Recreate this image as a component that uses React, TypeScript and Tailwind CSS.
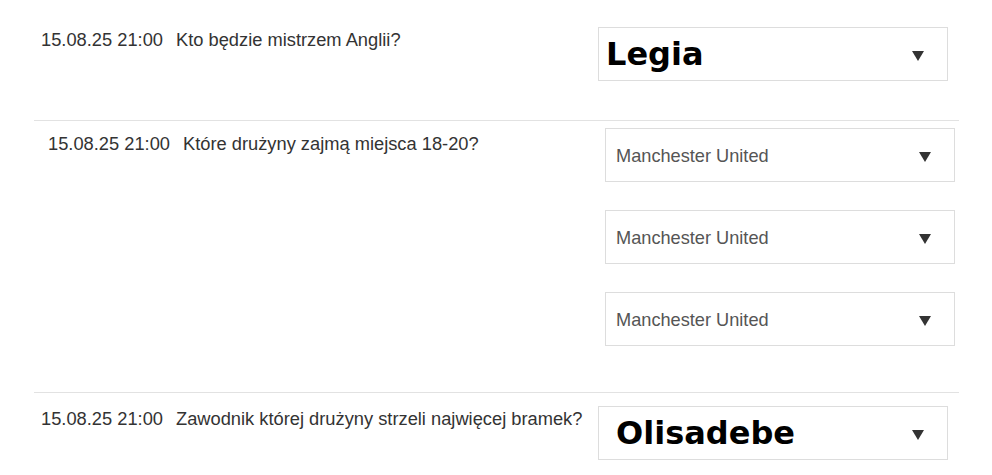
import React from "react";

const Arrow = () => (
  <svg width="12" height="10" viewBox="0 0 12 10" className="shrink-0">
    <polygon points="0,0 12,0 6,10" fill="#333333" />
  </svg>
);

type SelProps = { label: string; bold?: boolean; padLeft: string };

const Select = ({ label, bold, padLeft }: SelProps) => (
  <div
    className={`flex h-[54px] w-[350px] items-center justify-between border border-[#dddddd] bg-white pr-[23px] ${padLeft}`}
  >
    {bold ? (
      <span
        className="text-[32px] font-bold leading-none text-black"
        style={{ fontFamily: '"DejaVu Sans", sans-serif' }}
      >
        {label}
      </span>
    ) : (
      <span className="mt-[2px] text-[18.2px] leading-none text-[#555555]">{label}</span>
    )}
    <div className="mt-[3px]">
      <Arrow />
    </div>
  </div>
);

const Question = ({ date, text }: { date: string; text: string }) => (
  <div className="mt-[2px] flex gap-[13px] text-[18.3px] leading-[27px] text-[#333333]">
    <span>{date}</span>
    <span>{text}</span>
  </div>
);

export default function App() {
  return (
    <div
      className="min-h-[475px] w-[992px] bg-white"
      style={{ fontFamily: '"Liberation Sans", Arial, sans-serif' }}
    >
      <div className="ml-[34px] w-[925px]">
        <div className="flex justify-between border-b border-[#e2e2e2] pb-[39px] pl-[7px] pr-[11px] pt-[24px]">
          <Question date="15.08.25 21:00" text="Kto będzie mistrzem Anglii?" />
          <div className="mt-[3px]">
            <Select label="Legia" bold padLeft="pl-[7px]" />
          </div>
        </div>
        <div className="flex justify-between border-b border-[#e2e2e2] pb-[46px] pl-[14px] pr-[4px] pt-[7px]">
          <Question date="15.08.25 21:00" text="Które drużyny zajmą miejsca 18-20?" />
          <div className="flex flex-col gap-[28px]">
            <Select label="Manchester United" padLeft="pl-[10px]" />
            <Select label="Manchester United" padLeft="pl-[10px]" />
            <Select label="Manchester United" padLeft="pl-[10px]" />
          </div>
        </div>
        <div className="flex justify-between pl-[7px] pr-[11px] pt-[10px]">
          <Question date="15.08.25 21:00" text="Zawodnik której drużyny strzeli najwięcej bramek?" />
          <div className="mt-[3px]">
            <Select label="Olisadebe" bold padLeft="pl-[17px]" />
          </div>
        </div>
      </div>
    </div>
  );
}
